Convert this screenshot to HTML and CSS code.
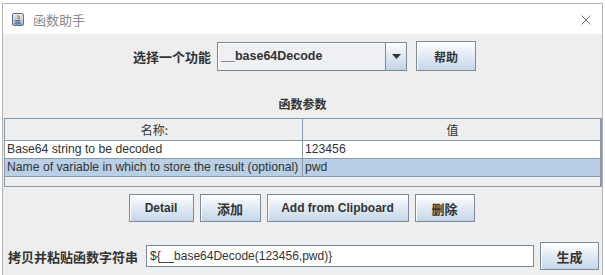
FILE: index.html
```html
<!DOCTYPE html>
<html lang="zh-CN">
<head>
  <meta charset="UTF-8" />
  <title>函数助手</title>
  <link rel="stylesheet" href="styles.css">
</head>
<body>
  <div class="window">
    <div class="titlebar">
      <svg class="app-icon" width="12" height="13" viewBox="0 0 12 13">
        <defs>
          <linearGradient id="ibg" x1="0" y1="0" x2="0" y2="1">
            <stop offset="0" stop-color="#e9eef4"/>
            <stop offset="1" stop-color="#9fb2c6"/>
          </linearGradient>
        </defs>
        <rect x="0.5" y="0.5" width="11" height="12" rx="1.5" fill="url(#ibg)" stroke="#5b7491"/>
        <path d="M6.2 2 C4.6 3.6 7.4 4.4 5.6 6.4 M7.6 3.4 C6.8 4.4 8 5 7.2 6.2" fill="none" stroke="#e8751a" stroke-width="1.1"/>
        <path d="M3 7.6 H8.6 M3.4 9.2 H8.2 M2.6 10.8 H9.2" stroke="#3b5f86" stroke-width="0.9"/>
      </svg>
      <span class="title">函数助手</span>
      <svg class="close" width="10" height="10" viewBox="0 0 10 10">
        <path d="M0.5 0.5 L9.5 9.5 M9.5 0.5 L0.5 9.5" stroke="#777" stroke-width="1"/>
      </svg>
    </div>

    <div class="content">
      <div class="row-select">
        <span class="label">选择一个功能</span>
        <div class="combo">
          <span class="combo-text">__base64Decode</span>
          <span class="combo-arrow"><svg width="9" height="5" viewBox="0 0 9 5"><path d="M0 0 H9 L4.5 5 Z" fill="#333"/></svg></span>
        </div>
        <button class="btn btn-help">帮助</button>
      </div>

      <div class="section-title">函数参数</div>

      <div class="table">
        <div class="tr head">
          <div class="td c1">名称:</div>
          <div class="td c2">值</div>
        </div>
        <div class="tr">
          <div class="td c1">Base64 string to be decoded</div>
          <div class="td c2">123456</div>
        </div>
        <div class="tr selected">
          <div class="td c1">Name of variable in which to store the result (optional)</div>
          <div class="td c2">pwd</div>
        </div>
        <div class="table-empty"></div>
      </div>

      <div class="row-buttons">
        <button class="btn btn-detail">Detail</button>
        <button class="btn btn-add cjk">添加</button>
        <button class="btn btn-clip">Add from Clipboard</button>
        <button class="btn btn-del cjk">删除</button>
      </div>

      <div class="row-output">
        <span class="label">拷贝并粘贴函数字符串</span>
        <div class="textfield">${__base64Decode(123456,pwd)}</div>
        <button class="btn btn-gen cjk">生成</button>
      </div>
    </div>
  </div>
</body>
</html>
```

FILE: styles.css
```css
body {
  margin: 0;
  background-color: #ffffff;
  font-family: 'Liberation Sans', Arial, 'Noto Sans CJK SC', sans-serif;
  font-size: 12px;
  color: #333333;
  overflow: hidden;
}

.window {
  margin: 3px 0 0 2px;
  width: 601px;
  height: 272px;
  border: 1px solid #b4b4b4;
  border-bottom: none;
  box-sizing: border-box;
  display: flex;
  flex-direction: column;
}

.titlebar {
  height: 30px;
  background-color: #ffffff;
  display: flex;
  align-items: center;
  padding-left: 9px;
  padding-right: 11px;
}

.app-icon {
  margin-right: 9px;
  margin-top: 1px;
}

.title {
  font-family: 'Noto Sans CJK SC', sans-serif;
  font-size: 13px;
  color: #8a8a8a;
  flex: 1;
}

.close {
  margin-top: 1px;
}

.content {
  flex: 1;
  background-color: #eeeeee;
  display: flex;
  flex-direction: column;
}

.label {
  font-family: 'Noto Sans CJK SC', sans-serif;
  font-weight: bold;
  font-size: 13px;
  color: #333333;
}

.cjk {
  font-family: 'Noto Sans CJK SC', sans-serif !important;
  font-size: 13px !important;
}

.row-select {
  display: flex;
  align-items: center;
  justify-content: center;
  margin-top: 7px;
  height: 30px;
  padding-left: 4px;
}

.row-select .label {
  margin-right: 6px;
}

.combo {
  width: 190px;
  height: 29px;
  box-sizing: border-box;
  border: 1px solid #7a8a99;
  background-color: #eef0f4;
  box-shadow: inset 1px 1px 0 #ffffff;
  display: flex;
  align-items: center;
}

.combo-text {
  flex: 1;
  padding-left: 3px;
  font-weight: bold;
  font-size: 12.5px;
  color: #333333;
}

.combo-arrow {
  width: 20px;
  height: 100%;
  border-left: 1px solid #7a8a99;
  background: linear-gradient(#ffffff, #dde7f1 50%, #c3d4e6);
  display: flex;
  align-items: center;
  justify-content: center;
}

.btn {
  font-family: 'Liberation Sans', Arial, 'Noto Sans CJK SC', sans-serif;
  font-weight: bold;
  font-size: 12px;
  color: #333333;
  border: 1px solid #7a8a99;
  border-radius: 0;
  background: linear-gradient(#ffffff, #e4ecf5 45%, #c5d6e8);
  box-shadow: inset 1px 1px 0 #ffffff;
  padding: 0;
  box-sizing: border-box;
  cursor: pointer;
}

.btn-help {
  width: 60px;
  height: 30px;
  margin-left: 9px;
}

.section-title {
  font-family: 'Noto Sans CJK SC', sans-serif;
  font-weight: bold;
  font-size: 12px;
  text-align: center;
  margin-top: 24px;
  height: 17px;
  line-height: 17px;
}

.table {
  margin: 6px 0 0 1px;
  width: 598px;
  height: 69px;
  box-sizing: border-box;
  border: 1px solid #8a99a8;
  border-right-width: 2px;
  display: flex;
  flex-direction: column;
}

.tr {
  display: flex;
  height: 17px;
  background-color: #ffffff;
  border-bottom: 1px solid #8a99a8;
}

.tr.head {
  height: 21px;
  background-color: #eeeeee;
}

.tr.selected {
  background-color: #b8cfe5;
}

.td {
  box-sizing: border-box;
  padding-left: 2px;
  line-height: 16px;
  font-size: 12.2px;
  white-space: nowrap;
  overflow: hidden;
}

.head .td {
  text-align: center;
  line-height: 21px;
  font-family: 'Noto Sans CJK SC', sans-serif;
  font-size: 12px;
}

.c1 {
  width: 298px;
  border-right: 1px solid #8a99a8;
}

.c2 {
  flex: 1;
}

.table-empty {
  flex: 1;
  background-color: #eeeeee;
}

.row-buttons {
  display: flex;
  justify-content: center;
  gap: 6px;
  margin-top: 7px;
  height: 28px;
  padding-right: 2px;
}

.btn-detail {
  width: 65px;
}

.btn-add {
  width: 61px;
}

.btn-clip {
  width: 142px;
}

.btn-del {
  width: 60px;
}

.row-output {
  display: flex;
  align-items: center;
  margin-top: 20px;
  height: 28px;
  padding-left: 5px;
}

.row-output .label {
  width: 137px;
}

.textfield {
  width: 388px;
  height: 22px;
  box-sizing: border-box;
  border: 1px solid #7a8a99;
  background-color: #ffffff;
  line-height: 20px;
  padding-left: 3px;
  margin-left: 1px;
  white-space: nowrap;
}

.btn-gen {
  width: 59px;
  height: 28px;
  margin-left: 6px;
}
```
